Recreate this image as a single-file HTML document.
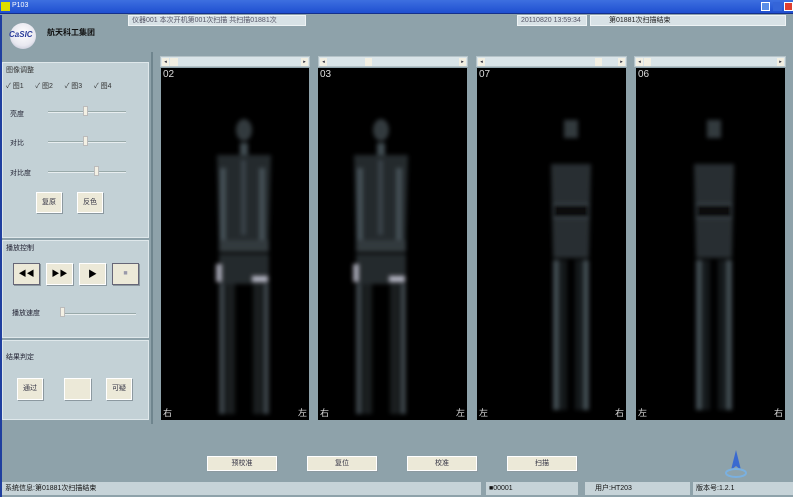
<!DOCTYPE html>
<html><head><meta charset="utf-8"><style>
*{margin:0;padding:0;box-sizing:border-box}
body{width:793px;height:497px;overflow:hidden;background:#8ea2aa;font-family:"Liberation Sans","Noto Sans CJK SC",sans-serif;font-size:8px;color:#223;position:relative}
.a{position:absolute}
.tb{left:0;top:0;width:793px;height:14px;background:linear-gradient(#3d6fe0,#1f4fd0);border-bottom:1px solid #15308a}
.field{background:#d8e2e6;border:1px solid #eef3f5;color:#556;font-size:7px;line-height:10px;padding-left:3px}
.lp{left:2px;width:147px;background:#c3d1d6;border:1px solid #dfe8eb}
.btn{background:#ece9d8;border:1px solid #fff;box-shadow:1px 1px 0 #8c99a0;font-size:7px;text-align:center;color:#334}
.sb{height:11px;background:#d9e4e8;border:1px solid #b5c3c8}
.sb i{position:absolute;top:1px;width:7px;height:8px;background:#f2efe2;font-style:normal;font-size:5px;line-height:8px;text-align:center}
.pn{background:#000;top:68px;height:352px}
.pn b{position:absolute;color:#ddd;font-weight:normal;font-size:10px}
.track{height:2px;background:#e8eef0;border-top:1px solid #9aa}
.thumb{width:5px;height:10px;background:#f3f0e4;border:1px solid #bbb}
</style></head><body>
<div class="a tb"></div>
<div class="a" style="left:1px;top:2px;width:9px;height:9px;background:#dd0;"></div>
<div class="a" style="left:12px;top:2px;color:#fff;font-size:7px">P103</div>
<div class="a" style="left:761px;top:2px;width:9px;height:9px;background:#5a8ee8;border:1px solid #fff"></div>
<div class="a" style="left:773px;top:2px;width:9px;height:9px;background:#3565d8"></div>
<div class="a" style="left:784px;top:2px;width:9px;height:9px;background:#e04030;border:1px solid #fff"></div>
<div class="a" style="left:0;top:15px;width:2px;height:482px;background:#1f3f9f"></div>
<div class="a" style="left:10px;top:23px;width:26px;height:26px;border-radius:50%;background:radial-gradient(circle at 50% 40%,#fff,#e8e8f0 60%,#b0b4c8)"></div>
<div class="a" style="left:9px;top:30px;color:#2a3c9a;font-weight:bold;font-size:8px;font-style:italic">CaSIC</div>
<div class="a" style="left:47px;top:27px;font-size:8px;font-weight:bold;color:#111">航天科工集团</div>
<div class="a field" style="left:128px;top:15px;width:178px;height:11px">仪器001 本次开机第001次扫描 共扫描01881次</div>
<div class="a field" style="left:517px;top:15px;width:70px;height:11px">20110820 13:59:34</div>
<div class="a field" style="left:590px;top:15px;width:196px;height:11px;color:#222;padding-left:18px">第01881次扫描结束</div>
<div class="a lp" style="top:62px;height:176px"></div>
<div class="a" style="left:6px;top:65px;font-size:7px;color:#333">图像调整</div>
<div class="a" style="left:6px;top:81px;font-size:7px;color:#333">✓ 图1 &nbsp;&nbsp;&nbsp;&nbsp; ✓ 图2 &nbsp;&nbsp;&nbsp;&nbsp; ✓ 图3 &nbsp;&nbsp;&nbsp;&nbsp; ✓ 图4</div>
<div class="a" style="left:10px;top:109px;font-size:7px">亮度</div>
<div class="a track" style="left:48px;top:111px;width:78px"></div>
<div class="a thumb" style="left:83px;top:106px"></div>
<div class="a" style="left:10px;top:138px;font-size:7px">对比</div>
<div class="a track" style="left:48px;top:141px;width:78px"></div>
<div class="a thumb" style="left:83px;top:136px"></div>
<div class="a" style="left:10px;top:168px;font-size:7px">对比度</div>
<div class="a track" style="left:48px;top:171px;width:78px"></div>
<div class="a thumb" style="left:94px;top:166px"></div>
<div class="a btn" style="left:36px;top:192px;width:26px;height:21px;line-height:19px">复原</div>
<div class="a btn" style="left:77px;top:192px;width:26px;height:21px;line-height:19px">反色</div>
<div class="a lp" style="top:240px;height:98px"></div>
<div class="a" style="left:6px;top:243px;font-size:7px">播放控制</div>
<div class="a btn" style="left:13px;top:263px;width:27px;height:22px;line-height:20px;font-size:8px;color:#000;border-color:#667">◀◀</div>
<div class="a btn" style="left:46px;top:263px;width:27px;height:22px;line-height:20px;font-size:8px;color:#000">▶▶</div>
<div class="a btn" style="left:79px;top:263px;width:27px;height:22px;line-height:20px;font-size:9px;color:#000">▶</div>
<div class="a btn" style="left:112px;top:263px;width:27px;height:22px;line-height:20px;color:#99a;border-color:#667">■</div>
<div class="a" style="left:12px;top:308px;font-size:7px">播放速度</div>
<div class="a track" style="left:60px;top:313px;width:76px"></div>
<div class="a thumb" style="left:60px;top:307px"></div>
<div class="a lp" style="top:340px;height:80px"></div>
<div class="a" style="left:6px;top:352px;font-size:7px">结果判定</div>
<div class="a btn" style="left:17px;top:378px;width:26px;height:22px;line-height:20px">通过</div>
<div class="a btn" style="left:64px;top:378px;width:27px;height:22px"></div>
<div class="a btn" style="left:106px;top:378px;width:26px;height:22px;line-height:20px">可疑</div>
<div class="a" style="left:151px;top:52px;width:2px;height:372px;background:#6f858e"></div>
<div class="a sb" style="left:160px;top:56px;width:150px"><i style="left:1px">◂</i><i style="left:9px;width:8px"></i><i style="right:1px">▸</i></div>
<div class="a sb" style="left:318px;top:56px;width:150px"><i style="left:1px">◂</i><i style="left:46px"></i><i style="right:1px">▸</i></div>
<div class="a sb" style="left:476px;top:56px;width:151px"><i style="left:1px">◂</i><i style="left:118px"></i><i style="right:1px">▸</i></div>
<div class="a sb" style="left:634px;top:56px;width:152px"><i style="left:1px">◂</i><i style="left:9px"></i><i style="right:1px">▸</i></div>
<svg width="0" height="0" style="position:absolute"><defs>
<filter id="bl" x="-50%" y="-10%" width="200%" height="120%"><feGaussianBlur stdDeviation="2"/></filter>
<g id="fat" filter="url(#bl)" fill="#8fa6b2">
<ellipse cx="0" cy="62" rx="8" ry="11" opacity=".35"/>
<rect x="-4" y="75" width="8" height="12" opacity=".45"/>
<path d="M-27 87 L27 87 L25 172 L-25 172 Z" opacity=".25"/>
<rect x="-24" y="100" width="6" height="72" opacity=".3"/>
<rect x="15" y="100" width="6" height="72" opacity=".3"/>
<rect x="-3" y="92" width="5" height="75" opacity=".2"/>
<rect x="-25" y="172" width="50" height="12" opacity=".35"/>
<rect x="-25" y="186" width="50" height="30" opacity=".25"/>
<rect x="-25" y="216" width="6" height="130" opacity=".4"/>
<rect x="-18" y="216" width="9" height="130" opacity=".18"/>
<rect x="19" y="216" width="6" height="130" opacity=".4"/>
<rect x="9" y="216" width="9" height="130" opacity=".18"/>
<rect x="-28" y="196" width="6" height="18" fill="#dde" opacity=".7"/>
<rect x="8" y="208" width="16" height="6" fill="#eef" opacity=".7"/>
</g>
<g id="thin" filter="url(#bl)" fill="#8fa6b2">
<rect x="-7" y="52" width="14" height="18" opacity=".35"/>
<path d="M-20 96 L20 96 L18 190 L-18 190Z" opacity=".28"/>
<rect x="-18" y="136" width="36" height="14" fill="#000" opacity=".8"/>
<rect x="-18" y="192" width="6" height="150" opacity=".45"/>
<rect x="-12" y="192" width="8" height="150" opacity=".15"/>
<rect x="12" y="192" width="6" height="150" opacity=".45"/>
<rect x="4" y="192" width="8" height="150" opacity=".15"/>
</g>
</defs></svg>
<div class="a pn" style="left:161px;width:148px"><b style="left:2px;top:1px">02</b><b style="left:2px;bottom:1px;font-size:9px">右</b><b style="right:2px;bottom:1px;font-size:9px">左</b>
<svg class="a" style="left:0;top:0" width="148" height="352"><use href="#fat" x="83" y="0"/></svg></div>
<div class="a pn" style="left:318px;width:149px"><b style="left:2px;top:1px">03</b><b style="left:2px;bottom:1px;font-size:9px">右</b><b style="right:2px;bottom:1px;font-size:9px">左</b>
<svg class="a" style="left:0;top:0" width="149" height="352"><use href="#fat" x="63" y="0"/></svg></div>
<div class="a pn" style="left:477px;width:149px"><b style="left:2px;top:1px">07</b><b style="left:2px;bottom:1px;font-size:9px">左</b><b style="right:2px;bottom:1px;font-size:9px">右</b>
<svg class="a" style="left:0;top:0" width="149" height="352"><use href="#thin" x="94" y="0"/></svg></div>
<div class="a pn" style="left:636px;width:149px"><b style="left:2px;top:1px">06</b><b style="left:2px;bottom:1px;font-size:9px">左</b><b style="right:2px;bottom:1px;font-size:9px">右</b>
<svg class="a" style="left:0;top:0" width="149" height="352"><use href="#thin" x="78" y="0"/></svg></div>
<div class="a btn" style="left:207px;top:456px;width:70px;height:15px;line-height:14px">预校准</div>
<div class="a btn" style="left:307px;top:456px;width:70px;height:15px;line-height:14px">复位</div>
<div class="a btn" style="left:407px;top:456px;width:70px;height:15px;line-height:14px">校准</div>
<div class="a btn" style="left:507px;top:456px;width:70px;height:15px;line-height:14px">扫描</div>
<svg class="a" style="left:722px;top:448px" width="28" height="32"><path d="M14 2 L9 22 L14 18 L19 22 Z" fill="#3a6ad0"/><ellipse cx="14" cy="25" rx="10" ry="4" fill="none" stroke="#7ab0e0" stroke-width="2"/></svg>
<div class="a" style="left:2px;top:482px;width:479px;height:13px;background:#c6d3d8;font-size:7px;line-height:13px;padding-left:3px;color:#111">系统信息:第01881次扫描结束</div>
<div class="a" style="left:486px;top:482px;width:92px;height:13px;background:#c6d3d8;font-size:7px;line-height:13px;padding-left:3px;color:#111">■00001</div>
<div class="a" style="left:585px;top:482px;width:105px;height:13px;background:#c6d3d8;font-size:7px;line-height:13px;padding-left:10px;color:#111">用户:HT203</div>
<div class="a" style="left:693px;top:482px;width:100px;height:13px;background:#c6d3d8;font-size:7px;line-height:13px;padding-left:3px;color:#111">版本号:1.2.1</div>
</body></html>
